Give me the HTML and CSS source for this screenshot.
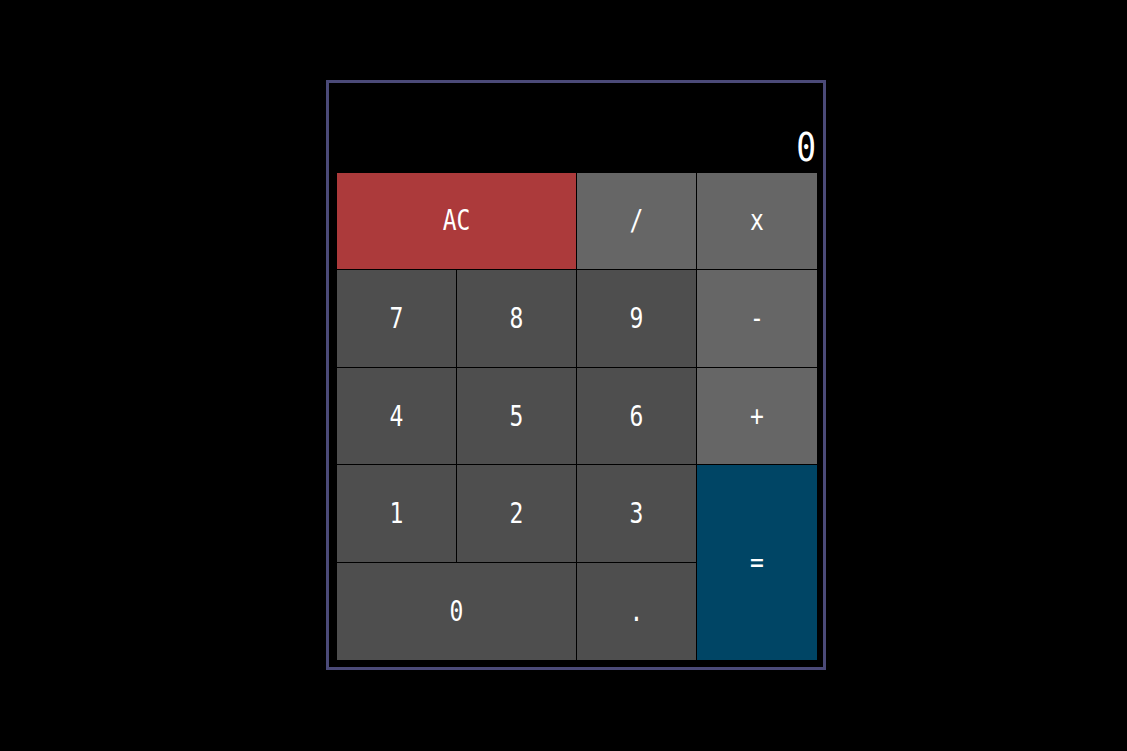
FILE: index.html
```html
<!DOCTYPE html>
<html>
<head>
<meta charset="utf-8">
<link rel="stylesheet" href="styles.css">
</head>
<body>
<div class="page">
  <div class="calc">
    <div class="display"><span class="display-value">0</span></div>
    <div class="keys">
      <div class="key key-clear span-2"><span>AC</span></div>
      <div class="key key-op"><span>/</span></div>
      <div class="key key-op"><span>x</span></div>
      <div class="key"><span>7</span></div>
      <div class="key"><span>8</span></div>
      <div class="key"><span>9</span></div>
      <div class="key key-op"><span>-</span></div>
      <div class="key"><span>4</span></div>
      <div class="key"><span>5</span></div>
      <div class="key"><span>6</span></div>
      <div class="key key-op"><span>+</span></div>
      <div class="key"><span>1</span></div>
      <div class="key"><span>2</span></div>
      <div class="key"><span>3</span></div>
      <div class="key key-equals span-rows"><span>=</span></div>
      <div class="key span-2"><span>0</span></div>
      <div class="key"><span>.</span></div>
    </div>
  </div>
</div>
</body>
</html>
```

FILE: styles.css
```css
html, body {
  margin: 0;
  padding: 0;
  background: #000;
}
.page {
  box-sizing: border-box;
  height: 751px;
  padding: 80px 0 0 25px;
  display: flex;
  align-items: flex-start;
  justify-content: center;
}
.calc {
  box-sizing: border-box;
  width: 500px;
  height: 590px;
  border: 3px solid #4b4a78;
  padding: 0 6px 7px 8px;
  display: flex;
  flex-direction: column;
}
.display {
  height: 90px;
  display: flex;
  justify-content: flex-end;
  align-items: flex-end;
  padding-bottom: 6px;
  box-sizing: border-box;
  color: #fff;
  font-family: "DejaVu Sans Mono", monospace;
  font-size: 30px;
  line-height: 1;
}
.display-value {
  display: inline-block;
  transform: scale(1.1, 1.3);
  transform-origin: bottom right;
  margin-right: 1px;
}
.keys {
  width: 480px;
  height: 487px;
  display: grid;
  grid-template-columns: 119px 119px 119px 120px;
  grid-template-rows: 96px 97px 96px 97px 97px;
  gap: 1px;
}
.key {
  background: #4e4e4e;
  color: #fff;
  display: flex;
  align-items: center;
  justify-content: center;
  font-family: "DejaVu Sans Mono", monospace;
  font-size: 23px;
  line-height: 1;
}
.key span {
  display: inline-block;
  transform: scaleY(1.2);
}
.key-op {
  background: #666666;
}
.key-clear {
  background: #ac3a3b;
}
.key-equals {
  background: #004565;
}
.span-2 {
  grid-column: span 2;
}
.span-rows {
  grid-column: 4;
  grid-row: 4 / span 2;
}
```
